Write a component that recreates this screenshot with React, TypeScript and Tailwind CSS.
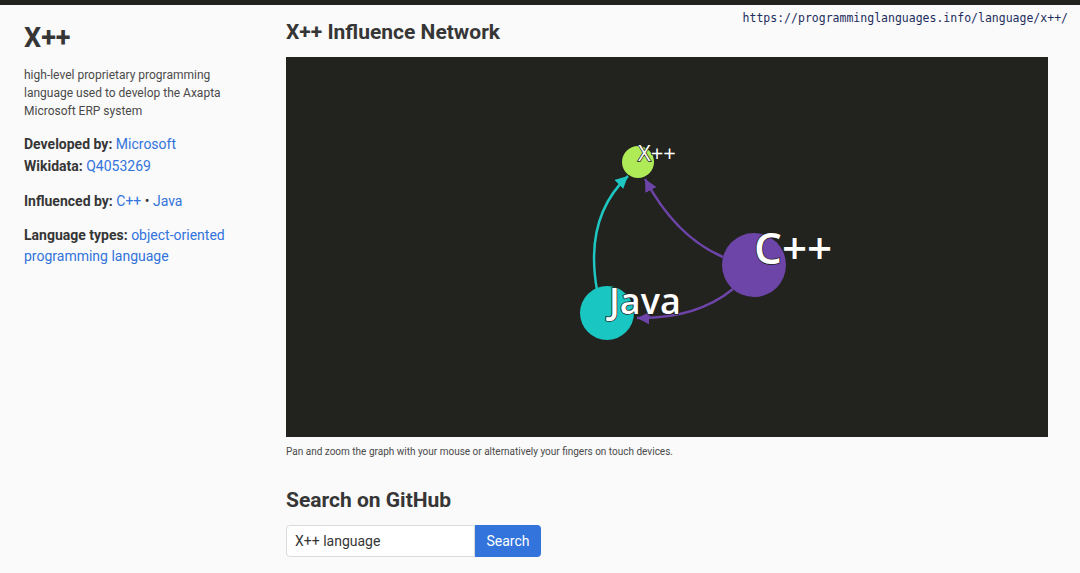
export default function App() {
  return (
    <div className="min-h-screen bg-[#fafafa] text-[#363636] font-['Roboto',sans-serif]">
      <div className="h-[5px] bg-[#22221e]" />
      <div className="absolute top-[10px] right-[12px] font-['DejaVu_Sans_Mono',monospace] text-[11.5px] text-[#1c2d5e]">
        https://programminglanguages.info/language/x++/
      </div>
      <div className="flex">
        <aside className="w-[286px] shrink-0 pl-6 pr-6 pt-[15px]">
          <h1 className="text-[27px] font-bold leading-[36px] text-[#363636]">X++</h1>
          <p className="mt-[10px] text-[12px] leading-[18px] text-[#4a4a4a] w-[210px]">
            high-level proprietary programming language used to develop the Axapta Microsoft ERP system
          </p>
          <div className="mt-[13px] text-[14px] leading-[22px]">
            <div>
              <span className="font-bold">Developed by:</span>{" "}
              <a className="text-[#3273dc]">Microsoft</a>
            </div>
            <div>
              <span className="font-bold">Wikidata:</span>{" "}
              <a className="text-[#3273dc]">Q4053269</a>
            </div>
          </div>
          <div className="mt-[13px] text-[14px] leading-[22px]">
            <span className="font-bold">Influenced by:</span>{" "}
            <a className="text-[#3273dc]">C++</a> • <a className="text-[#3273dc]">Java</a>
          </div>
          <div className="mt-[13px] text-[14px] leading-[21px]">
            <span className="font-bold">Language types:</span>{" "}
            <a className="text-[#3273dc]">object-oriented programming language</a>
          </div>
        </aside>
        <main className="flex-1 pr-8 pt-[14px]">
          <h2 className="text-[21px] font-bold leading-[26px] text-[#363636]">X++ Influence Network</h2>
          <div className="mt-[12px] h-[380px] bg-[#22221e]">
            <svg width="762" height="380" viewBox="0 0 762 380">
              <defs>
                <marker id="aTeal" viewBox="0 0 10 10" refX="10" refY="5" markerWidth="5" markerHeight="5" orient="auto">
                  <path d="M0,0 L10,5 L0,10 z" fill="#1ec6c1" />
                </marker>
                <marker id="aPurple" viewBox="0 0 10 10" refX="10" refY="5" markerWidth="5" markerHeight="5" orient="auto">
                  <path d="M0,0 L10,5 L0,10 z" fill="#6d44a8" />
                </marker>
              </defs>
              <path d="M311,233 Q298,160 342,119" stroke="#1ec6c1" strokeWidth="2.5" fill="none" markerEnd="url(#aTeal)" />
              <path d="M437,200 Q390,180 359,122" stroke="#6d44a8" strokeWidth="2.5" fill="none" markerEnd="url(#aPurple)" />
              <path d="M447,232 Q410,262 351,261" stroke="#6d44a8" strokeWidth="2.5" fill="none" markerEnd="url(#aPurple)" />
              <circle cx="352" cy="105" r="16" fill="#aeeb56" />
              <circle cx="321" cy="256" r="27" fill="#19c6c1" />
              <circle cx="468" cy="208" r="32" fill="#6d44a8" />
              <g fontFamily="'Open Sans', sans-serif" fill="#ffffff" stroke="#22221e" strokeWidth="1.5" style={{ paintOrder: "stroke" }}>
                <text x="352" y="104" fontSize="22">X++</text>
                <text x="468" y="207" fontSize="44" fontWeight="600">C++</text>
                <text x="323" y="257" fontSize="36" fontWeight="600">Java</text>
              </g>
            </svg>
          </div>
          <p className="mt-[8px] text-[10px] leading-[14px] text-[#4a4a4a]">
            Pan and zoom the graph with your mouse or alternatively your fingers on touch devices.
          </p>
          <h2 className="mt-[28px] text-[21px] font-bold leading-[26px] text-[#363636]">Search on GitHub</h2>
          <div className="mt-[12px] flex">
            <input
              defaultValue="X++ language"
              className="w-[189px] h-[32px] px-2 text-[14px] text-[#363636] bg-white border border-[#dbdbdb] rounded-l-[4px] outline-none"
            />
            <button className="h-[32px] w-[66px] bg-[#3273dc] text-white text-[14px] rounded-r-[4px]">Search</button>
          </div>
        </main>
      </div>
    </div>
  );
}
